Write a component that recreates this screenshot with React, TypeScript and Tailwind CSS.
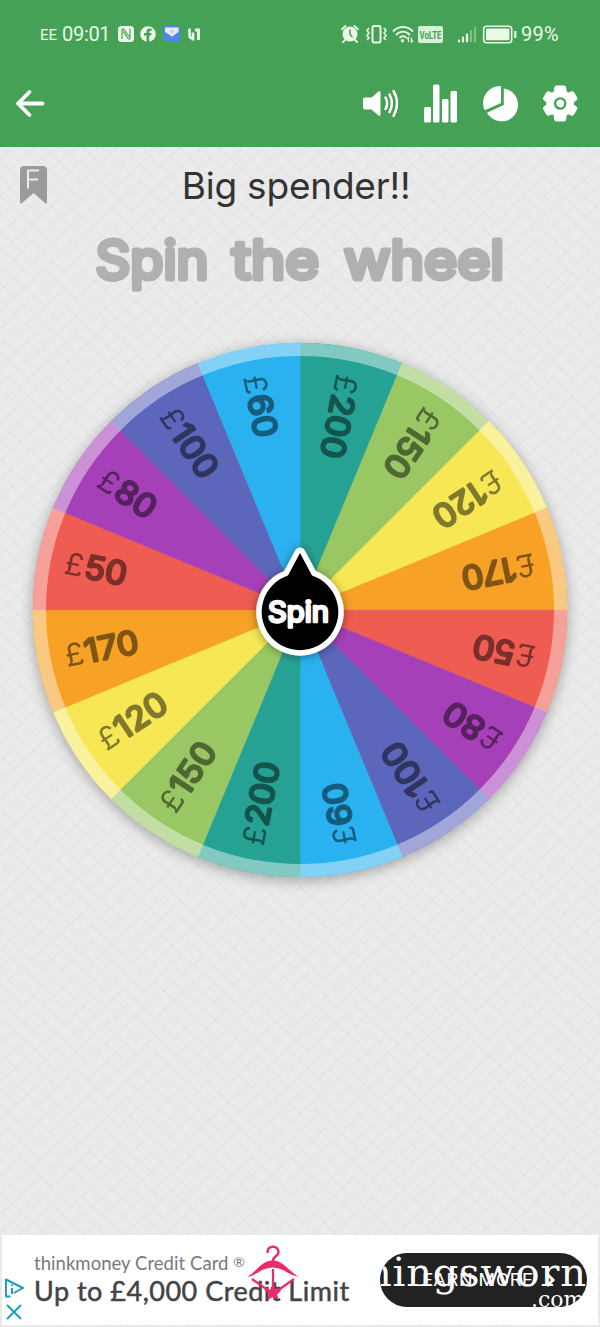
const SLICES = [
  { amount: "200", color: "#26a294" },
  { amount: "150", color: "#98c764" },
  { amount: "120", color: "#f7e755" },
  { amount: "170", color: "#f7a226" },
  { amount: "50", color: "#ef5c51" },
  { amount: "80", color: "#a640b8" },
  { amount: "100", color: "#5b66ba" },
  { amount: "60", color: "#2ab1ef" },
];

const WHEEL = [...SLICES, ...SLICES];
const STEP = 360 / WHEEL.length;
const RADIUS = 267;

function point(deg: number, r: number) {
  const a = (deg * Math.PI) / 180;
  return `${(Math.sin(a) * r).toFixed(2)} ${(-Math.cos(a) * r).toFixed(2)}`;
}

function StatusBar() {
  return (
    <div className="flex h-[68px] items-center pl-10 pr-10 font-[Roboto,sans-serif] text-[#e9f8e9]">
      <span className="mt-0.5 w-[22px] text-[15px] leading-none">EE</span>
      <span className="w-[55px] text-[20px] leading-none tracking-[-0.3px] whitespace-nowrap">09:01</span>
      {/* nfc, facebook, mail, app */}
      <svg className="h-4 w-[84px]" viewBox="0 0 84 16" fill="none">
        <rect x="1" y="0" width="16" height="16" rx="3.5" fill="#e9f8e9" />
        <path d="M5 13V4.5c0-2 1-2 2-.8l5 6.8M13 3v8.5c0 2-1 2-2 .8L6 5.5" stroke="#45a155" strokeWidth="1.2" />
        <circle cx="31" cy="8" r="7.8" fill="#e9f8e9" />
        <path d="M29.500 16V9.500H27V7h2.500V5.500c0-2 1.300-3 3-3h2V5h-1.200c-.8 0-1.100.4-1.100 1V7h2.300L34 9.500h-1.800V16z" fill="#45a155" />
        <rect x="46.500" y="0" width="16.500" height="16.500" rx="3" fill="#4f86e8" />
        <path d="M48 1.500h13.500V6L55 10.500 48 6z" fill="#e6edfb" />
        <circle cx="55" cy="5.500" r="2" fill="#c5cff5" />
        <path d="M72.500 2.500v6.500c0 2.200 1 3.200 2.800 3.200h2M76 6.500v8" stroke="#e9f8e9" strokeWidth="2.600" />
        <path d="M78 4h3.500v10" stroke="#e9f8e9" strokeWidth="3" />
      </svg>
      <div className="flex-1" />
      {/* alarm, vibrate, wifi, volte, signal, battery */}
      <svg className="h-[22px] w-[177px]" viewBox="0 0 177 22" fill="none" stroke="#e9f8e9">
        <circle cx="10" cy="11" r="7.500" fill="#e9f8e9" stroke="none" />
        <path d="M2 6.200 5.500 3M18 6.200 14.500 3M5 17l-2 2M15 17l2 2" strokeWidth="2" strokeLinecap="round" />
        <path d="M10 6.500v5l2.500 2.500" stroke="#45a155" strokeWidth="1.500" />
        <rect x="32.500" y="3" width="8" height="16.500" rx="1.500" strokeWidth="2" />
        <path d="m29 5-2 2.500 2 2.500-2 2.500 2 2.500-2 2M44 5l2 2.500-2 2.500 2 2.500-2 2.500 2 2" strokeWidth="1.600" />
        <path d="M53 8.500c5.500-6 14.500-6 20 0M56 12c4-4.500 10-4.500 14 0M59.500 15c2-2.500 5-2.500 7 0" strokeWidth="1.900" />
        <circle cx="62.500" cy="17.800" r="1.700" fill="#e9f8e9" stroke="none" />
        <path d="M68.500 19v-4.500L67 16M71.500 14.500V19l1.500-1.500" strokeWidth="1.300" />
        <rect x="78" y="3" width="25" height="17" rx="2" fill="#d9f0d9" stroke="none" />
        <text x="79.500" y="15.500" textLength="22" lengthAdjust="spacingAndGlyphs" fontFamily="Roboto, sans-serif" fontWeight="700" fontSize="11.500" fill="#45a155" stroke="none">VoLTE</text>
        <g strokeWidth="2.200" strokeLinecap="round">
          <path d="M119 18.500v-1M123 18.500v-4M127 18.500v-7" />
          <path d="M131 18.500V8M135 18.500V5" opacity=".35" />
        </g>
        <rect x="143.700" y="3.200" width="28" height="16.500" rx="3" strokeWidth="1.600" />
        <rect x="146" y="5.600" width="23.400" height="11.700" rx="1.200" fill="#e9f8e9" stroke="none" />
        <path d="M175.300 8v7" strokeWidth="2.200" />
      </svg>
      <span className="ml-[4px] w-[39px] text-[20px] leading-none tracking-[0.3px] whitespace-nowrap">99%</span>
    </div>
  );
}

function Toolbar() {
  return (
    <div className="flex h-[79px] items-start justify-between pt-[15px] pr-5 pl-3">
      <svg className="size-10" viewBox="0 0 40 40" fill="none" stroke="#fff" strokeWidth="3.800" strokeLinecap="round" strokeLinejoin="round">
        <path d="M30.500 20.500H6M17.500 9 6 20.500l11.500 11.500" />
      </svg>
      <div className="flex gap-5">
        <svg className="size-10" viewBox="0 0 40 40" fill="#fff">
          <path d="M5 14.500h6.500l7-6c.8-.7 2-.3 2 .8v22.500c0 1-1.200 1.500-2 .8l-7-6H5c-1.200 0-2-.8-2-2v-8c0-1.300.8-2.100 2-2.100z" />
          <path d="M25.500 14.500c2 3.500 2 8 0 11.500M29.500 11.500c3 5.500 3 12 0 17.500M33.500 8c4.500 7.500 4.500 17 0 25" fill="none" stroke="#fff" strokeWidth="2.500" strokeLinecap="round" />
        </svg>
        <svg className="size-10" viewBox="0 0 40 40" fill="#fff">
          <rect x="4" y="24" width="7" height="15.500" rx="1.500" />
          <rect x="13" y="1.500" width="6.500" height="38" rx="1.500" />
          <rect x="22" y="16" width="6.500" height="23.500" rx="1.500" />
          <rect x="30.500" y="8" width="6.500" height="31.500" rx="1.500" />
        </svg>
        <svg className="size-10" viewBox="0 0 40 40" fill="#fff">
          <path d="M20 3C20.800 3 21 3.500 21 4v16L4.700 27.300C2 21 2.500 14.500 7 9.200 10.500 5 15 3 20 3z" />
          <path d="M23.800 5.500c8 1.200 14.200 7.500 14.200 16C38 31 31 38.300 22 38.300c-6.500 0-12-3.300-15-8.600L23.800 22z" />
        </svg>
        <svg className="size-10" viewBox="0 0 40 40" fill="#fff">
          <g transform="translate(2 2) scale(.91)">
            <path fillRule="evenodd" stroke="#fff" strokeWidth="1" d="M15.500 1h9c.8 0 1.200.5 1.400 1.200l.8 5.300 2.200 1.300 4-1.500c.8-.3 1.400 0 1.800.6l3.700 6.500c.3.700.2 1.400-.4 1.900L34.700 19v2.600l3.300 2.700c.6.500.7 1.200.4 1.900l-3.700 6.500c-.4.600-1 .9-1.800.6l-4-1.500-2.200 1.300-.8 5.300c-.2.700-.6 1.200-1.400 1.200h-9c-.8 0-1.200-.5-1.400-1.200l-.8-5.300-2.200-1.300-4 1.500c-.8.300-1.400 0-1.800-.6l-3.700-6.500c-.3-.7-.2-1.400.4-1.900L5.300 21.600V19L2 16.300c-.6-.5-.7-1.200-.4-1.900l3.700-6.500c.4-.6 1-.9 1.800-.6l4 1.500 2.200-1.300.8-5.300C14.300 1.500 14.700 1 15.500 1z" />
            <circle cx="20" cy="20.300" r="5.600" fill="none" stroke="#45a155" strokeWidth="2.600" />
          </g>
        </svg>
      </div>
    </div>
  );
}

function Wheel() {
  return (
    <svg className="block h-[600px] w-[600px] shrink-0" viewBox="-300 -300 600 600">
      <defs>
        <filter id="wheelShadow" x="-10%" y="-10%" width="120%" height="120%">
          <feDropShadow dx="0" dy="3" stdDeviation="7" floodColor="#000" floodOpacity=".33" />
        </filter>
        <filter id="hubShadow" x="-30%" y="-30%" width="160%" height="160%">
          <feDropShadow dx="0" dy="1" stdDeviation="5" floodColor="#000" floodOpacity=".4" />
        </filter>
      </defs>
      <g filter="url(#wheelShadow)">
        {WHEEL.map((s, i) => (
          <path
            key={i}
            d={`M0 0L${point(i * STEP, RADIUS)}A${RADIUS} ${RADIUS} 0 0 1 ${point((i + 1) * STEP, RADIUS)}Z`}
            fill={s.color}
            stroke={s.color}
            strokeWidth=".4"
          />
        ))}
      </g>
      <circle r="260.500" fill="none" stroke="#fff" strokeOpacity=".42" strokeWidth="13" />
      {WHEEL.map((s, i) => (
        <g key={i} transform={`rotate(${(i + 0.5) * STEP - 270})`} opacity=".48" fontFamily="Inter, sans-serif">
          <text x="-239.500" y="10.500" fontSize="31" fontWeight="400">£</text>
          <g transform="translate(-219.500 10.500) scale(1.060 1)">
            <text fontSize="32.500" fontWeight="400" stroke="#000" strokeWidth="2.500" strokeLinejoin="round">
              {s.amount}
            </text>
          </g>
        </g>
      ))}
      {/* Hub */}
      <path
        d="M0-57 12-34.500A38.300 38.300 0 1 1-12-34.500Z"
        fill="#000"
        stroke="#fff"
        strokeWidth="11"
        strokeLinejoin="round"
        paintOrder="stroke"
        filter="url(#hubShadow)"
      />
      <text x="-32" y="11.500" textLength="61" lengthAdjust="spacingAndGlyphs" fontFamily="Inter, sans-serif" fontSize="28" fontWeight="400" fill="#fff" stroke="#fff" strokeWidth="2.600" strokeLinejoin="round">
        Spin
      </text>
    </svg>
  );
}

function AdBanner() {
  return (
    <div className="relative mx-[2px] mb-[2px] flex h-[90px] shrink-0 bg-white">
      <div className="flex w-[32px] flex-col items-start gap-[5px] pt-[43px] pl-[2px]">
        <svg className="h-5 w-5" viewBox="0 0 20 20" fill="none" stroke="#1ba0b8" strokeWidth="2" strokeLinejoin="round">
          <path d="M6.500 18.500H2V1.500l17 8.500-9 5M8 6.500v1.500M8 10v6" />
        </svg>
        <svg className="h-[18px] w-5" viewBox="0 0 20 18" stroke="#1ba0b8" strokeWidth="2">
          <path d="M3 2l14 14M17 2 3 16" />
        </svg>
      </div>
      <div className="w-[346px] pt-[15px] font-[Lato,sans-serif] whitespace-nowrap">
        <div className="text-[18.5px] leading-[23px] tracking-[0.05px] text-[#77797c]">
          thinkmoney Credit Card <span className="align-[3px] text-[14px]">®</span>
        </div>
        <div className="text-[27px] leading-[32px] tracking-[0.5px] text-[#424447] [-webkit-text-stroke:0.5px_#424447]">
          Up to £4,000 Credit Limit
        </div>
      </div>
      <div className="relative mt-[18px] h-[54px] w-[207px] overflow-hidden rounded-full bg-[#222222] text-white">
        <span className="absolute top-[17px] left-[31px] font-[Roboto,sans-serif] text-[19px] leading-[20px] tracking-[0.7px] whitespace-nowrap">
          LEARN MORE
        </span>
        <svg className="absolute top-[19px] left-[165px] h-4 w-3" viewBox="0 0 12 16" fill="none" stroke="#fff" strokeWidth="3">
          <path d="m2 2 6 6-6 6" />
        </svg>
        <span className="absolute top-[-4px] left-[-14px] font-['DejaVu_Serif',serif] text-[40px] leading-[46px] tracking-[0.8px] whitespace-nowrap">
          hingsworn
        </span>
        <span className="absolute top-[33px] left-[151px] font-['DejaVu_Serif',serif] text-[22px] leading-[28px]">.com</span>
      </div>
      {/* Hanger logo */}
      <svg className="absolute top-[10px] left-[244px] h-[56px] w-[54px]" viewBox="0 0 54 56" fill="none" stroke="#ec2a6b">
        <path d="M21.500 7c0-7 11-7 11 0 0 5-5.500 3.500-5.500 9" strokeWidth="2.500" strokeLinecap="round" />
        <path d="M1 31.500C9 29 15 15.500 26.500 15.500S45 29 53 31.500c-9 0-15-9-26.500-9S10 31.500 1 31.500z" fill="#ec2a6b" stroke="none" />
        <path d="m6 34 17 12M48 34 31 46" strokeWidth="2.300" />
        <path d="M27 24v24" strokeWidth="2.200" />
        <path d="m27 39 2.800 5.500 5.700.7-4.200 4 1 5.800-5.300-3-5.300 3 1-5.800-4.200-4 5.700-.7z" fill="#ec2a6b" stroke="none" />
      </svg>
    </div>
  );
}

export default function App() {
  return (
    <div className="flex h-[1327px] w-[600px] flex-col overflow-hidden bg-[#ebebeb] bg-[repeating-linear-gradient(42deg,transparent_0_7px,rgba(0,0,0,0.016)_8px_9px,transparent_10px_13px),repeating-linear-gradient(-42deg,transparent_0_8px,rgba(0,0,0,0.016)_9px_10px,transparent_11px_14px),repeating-linear-gradient(48deg,transparent_0_4px,rgba(0,0,0,0.012)_5px,transparent_6px_9px),repeating-linear-gradient(-48deg,transparent_0_4px,rgba(0,0,0,0.012)_5px,transparent_6px_9px)]">
      <header className="h-[147px] shrink-0 bg-[#45a155]">
        <StatusBar />
        <Toolbar />
      </header>
      <main className="flex flex-1 flex-col">
        <div className="relative flex h-[78px] shrink-0 justify-center">
          <svg className="absolute top-[19px] left-5 h-[39px] w-[27px]" viewBox="0 0 27 39" fill="none">
            <path d="M0 4c0-2.500 1.500-4 4-4h19c2.500 0 4 1.500 4 4v32c0 1.500-1 2-2 1L13.500 27 2 37c-1 1-2 .5-2-1z" fill="#9b9b9b" />
            <path d="M8 22.500V4.500h11M8 13.500H18" stroke="#ebebeb" strokeWidth="2" />
          </svg>
          <h1 className="mr-[8px] pt-[16px] font-[Inter,sans-serif] text-[37px] leading-[45px] font-normal tracking-[-0.2px] whitespace-nowrap text-[#333333]">
            Big spender!!
          </h1>
        </div>
        {/* Rounded lettering of the heading */}
        <h2 className="h-[85px] shrink-0">
          <svg className="block h-[85px] w-[600px]" viewBox="0 0 600 85" fontFamily="Inter, sans-serif" fontSize="53" fontWeight="400" fill="#b0b0b0" stroke="#b0b0b0" strokeWidth="5" strokeLinejoin="round">
            <text x="95.500" y="53.500" textLength="113" lengthAdjust="spacingAndGlyphs">Spin</text>
            <text x="232" y="53.500" textLength="87" lengthAdjust="spacingAndGlyphs">the</text>
            <text x="344" y="53.500" textLength="160" lengthAdjust="spacingAndGlyphs">wheel</text>
          </svg>
        </h2>
        <Wheel />
        <div className="flex-1" />
        <AdBanner />
      </main>
    </div>
  );
}
